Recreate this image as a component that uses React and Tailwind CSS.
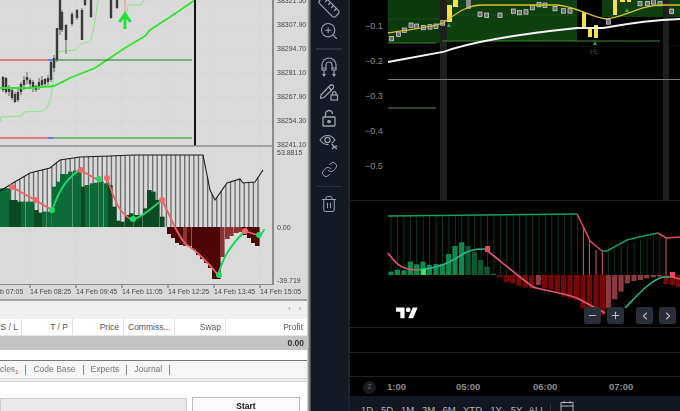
import { Ruler, ZoomIn, Link, Trash2, Minus, Plus, ChevronLeft, ChevronRight } from "lucide-react";

const sans = "font-['Liberation_Sans',Arial,sans-serif]";

const priceLabels = ["38321.50", "38307.90", "38294.70", "38281.10", "38267.90", "38254.30", "38241.10"];
const dateLabels = ["14 Feb 08:25", "14 Feb 09:45", "14 Feb 11:05", "14 Feb 12:25", "14 Feb 13:45", "14 Feb 15:05"];
const dateTicks = [30, 76, 122, 168, 214, 260];
const rangeButtons = [
  ["1D", "w-[20px]"], ["5D", "w-[20px]"], ["1M", "w-[21px]"], ["3M", "w-[21px]"], ["6M", "w-[20px]"],
  ["YTD", "w-[27px]"], ["1Y", "w-[20px]"], ["5Y", "w-[21px]"], ["ALL", "w-[20px]"],
];

// x, wick top, wick bottom, body top, body bottom
const leftCandles = [
  [3, 76, 92, 77, 90], [6, 77, 94, 78, 92], [9, 85, 96, 87, 92], [12, 88, 100, 90, 98], [15, 92, 103, 94, 102],
  [18, 88, 102, 92, 100], [21, 82, 95, 84, 92], [24, 76, 90, 80, 85], [27, 72, 84, 77, 80], [30, 78, 88, 80, 84],
  [33, 80, 92, 82, 88], [36, 85, 92, 86, 90], [39, 78, 90, 82, 88], [42, 76, 88, 80, 85], [45, 78, 86, 79, 84],
  [48, 75, 85, 78, 82], [51, 60, 82, 62, 80], [54, 55, 72, 58, 68], [57, 28, 62, 28, 60], [60, 0, 35, 0, 30],
  [62, 10, 32, 12, 30], [66, 24, 54, 25, 40], [72, 12, 26, 14, 24], [77, 9, 20, 10, 18], [82, 8, 40, 10, 40],
  [85, 0, 6, 0, 5], [91, 0, 18, 0, 17], [111, 0, 19, 0, 18], [117, 0, 9, 0, 8],
];

// x, top of the bar in zoomed px, shade
const leftBars = [
  [0, 115, 0], [3, 115, 0], [6, 115, 0], [9, 150, 1], [13, 150, 1], [17, 155, 1], [21, 155, 0], [26, 155, 0], [30, 155, 0],
  [34, 180, 1], [38, 188, 1], [42, 185, 0], [47, 185, 0], [52, 110, 0], [56, 95, 0], [60, 72, 0], [64, 72, 0], [68, 65, 0],
  [73, 62, 0], [77, 60, 0], [81, 110, 1], [85, 105, 0], [90, 100, 0], [94, 98, 0], [99, 95, 0], [104, 100, 0], [108, 105, 1],
  [112, 170, 1], [116, 212, 1], [120, 215, 1], [125, 195, 1], [129, 190, 1], [134, 195, 1], [138, 195, 1], [143, 175, 1],
  [147, 120, 1], [151, 125, 1], [155, 150, 1], [160, 200, 1],
].map(([x, z, c]) => [x, 150 + z / 3, c]);

const redStairs = [
  [167, 234, 1], [171, 238, 1], [175, 243, 1], [179, 245, 1], [183, 246, 2], [187, 246, 1], [192, 250, 1], [196, 255, 1],
  [200, 259, 1], [204, 263, 1], [208, 268, 1], [212, 279, 1], [216, 279, 1], [220, 257, 2], [225, 239, 2], [229, 236, 2],
  [234, 233, 2], [238, 232, 2], [242, 235, 1], [247, 238, 1], [251, 243, 1], [255, 246, 1],
];

const oscTop = [[0, 191], [13, 183], [30, 173], [50, 168], [60, 160], [80, 157], [110, 156], [133, 155], [203, 155], [210, 190], [215, 200], [227, 183], [240, 179], [243, 183], [255, 182], [263, 170]];

function topAt(x) {
  for (let i = 1; i < oscTop.length; i++) {
    const [x0, y0] = oscTop[i - 1];
    const [x1, y1] = oscTop[i];
    if (x <= x1) return y0 + ((x - x0) / (x1 - x0)) * (y1 - y0);
  }
  return 170;
}

const panelBars = [
  [243, 215, 0], [262, 209, 0], [282, 211, 0], [301, 185, 0], [320, 193, 0], [339, 185, 0], [358, 195, 0], [378, 192, 0],
  [397, 192, 0], [416, 162, 0], [435, 138, 0], [455, 127, 0], [474, 138, 1], [493, 157, 1], [512, 180, 1], [531, 200, 1], [550, 220, 1],
];
const panelDownBars = [
  [570, 232, 0], [589, 246, 0], [608, 250, 0], [627, 258, 0], [646, 262, 0], [665, 265, 0], [685, 255, 1], [704, 265, 0],
  [723, 268, 0], [742, 275, 0], [761, 290, 0], [780, 295, 0], [800, 300, 0], [819, 325, 0], [838, 325, 0], [858, 335, 0],
  [877, 345, 0], [895, 325, 1], [914, 298, 1], [933, 275, 1], [952, 250, 1], [972, 243, 1], [991, 240, 1], [1010, 235, 1],
  [1030, 232, 1], [1048, 230, 1], [1068, 252, 0], [1087, 255, 0], [1106, 262, 0],
];
const hollowCandles = [
  [245, 115], [265, 102], [283, 90], [303, 75], [320, 78], [340, 82], [360, 80], [378, 78], [398, 68], [510, 42], [530, 45],
  [570, 45], [610, 33], [628, 37], [648, 35], [667, 22], [687, 13], [705, 15], [735, 25], [760, 32], [780, 32], [895, 65],
  [990, 10], [1012, 10], [1030, 5], [1050, 10], [1085, 33],
];

function zx(x) {
  return 310 + x / 3;
}

function MainChart() {
  return (
    <svg viewBox="0 0 272 147" className="h-[147px] w-[272px] shrink-0">
      {dateTicks.map((x) => (
        <line key={x} x1={x} x2={x} y1="0" y2="146" stroke="#c6c6c6" strokeWidth="0.6" strokeDasharray="1 2" />
      ))}
      {[2, 26, 50, 73, 97, 121].map((y) => (
        <line key={y} x1="0" x2="272" y1={y} y2={y} stroke="#c6c6c6" strokeWidth="0.6" strokeDasharray="1 2" />
      ))}
      <path d="M0 122 L1 117 L22 116 L24 112 L42 111 L47 108 L51 98 L55 62 L58 52 L75 50 L82 43 L90 42 L94 28 L98 0" fill="none" stroke="#7fe67f" strokeWidth="0.9" />
      <path d="M126 18 L128 5 L141 5 L144 0" fill="none" stroke="#7fe67f" strokeWidth="0.9" />
      {leftCandles.map(([x, a, b, c, d]) => (
        <g key={x}>
          <line x1={x} x2={x} y1={a} y2={b} stroke="#333" strokeWidth="0.7" />
          <rect x={x - 1.2} y={c} width="2.4" height={d - c} fill="#3a3a3a" />
        </g>
      ))}
      <path d="M0 88 L30 88 L54 86 L70 78 L95 68 L110 58 L125 48 L145 36 L150 30 L170 17 L195 0" fill="none" stroke="#2ee52e" strokeWidth="1.8" />
      <line x1="0" x2="48" y1="60" y2="60" stroke="#f01818" strokeWidth="1.2" />
      <line x1="48" x2="54" y1="60" y2="60" stroke="#2040e0" strokeWidth="1.2" />
      <line x1="54" x2="192" y1="60" y2="60" stroke="#1d7a1d" strokeWidth="1.2" />
      <line x1="0" x2="48" y1="138" y2="138" stroke="#f01818" strokeWidth="1.2" />
      <line x1="48" x2="54" y1="138" y2="138" stroke="#2040e0" strokeWidth="1.2" />
      <line x1="54" x2="192" y1="138" y2="138" stroke="#0f9a0f" strokeWidth="1.2" />
      <line x1="125" x2="125" y1="0" y2="12" stroke="#f07050" strokeWidth="0.7" />
      <path d="M125 29 L125 14 M119.5 22 L125 14 L130.5 22" fill="none" stroke="#22e03a" strokeWidth="3" />
      <line x1="195" x2="195" y1="0" y2="146" stroke="#111" strokeWidth="2" />
      <line x1="0" x2="272" y1="146" y2="146" stroke="#8d8d8d" strokeWidth="1.6" />
    </svg>
  );
}

function OscillatorChart() {
  return (
    <svg viewBox="0 147 272 138" className="relative z-10 h-[138px] w-[272px] shrink-0 overflow-visible">
      {dateTicks.map((x) => (
        <line key={x} x1={x} x2={x} y1="147" y2="285" stroke="#c6c6c6" strokeWidth="0.6" strokeDasharray="1 2" />
      ))}
      {Array.from({ length: 57 }, (_, i) => 1.5 + i * 4.58).map((x) => (
        <line key={x} x1={x} x2={x} y1={topAt(x)} y2="227" stroke="#6c706d" strokeWidth="1.4" />
      ))}
      {leftBars.map(([x, top, c]) => (
        <rect key={x} x={x} y={top} width="4.6" height={227 - top} fill={c ? "#0b4a22" : "#0a6b36"} />
      ))}
      {redStairs.map(([x, bottom, c]) => (
        <rect key={x} x={x} y="227" width="4.6" height={bottom - 227} fill={c === 2 ? "#8a3434" : "#4c0606"} />
      ))}
      <path d="M0 191 L13 183 L30 173 L50 168 L60 160 L80 157 L110 156 L133 155 L203 155 L210 190 L215 200 L227 183 L240 179 L243 183 L255 182 L263 170" fill="none" stroke="#1a1a1a" strokeWidth="1.1" />
      <g fill="none" strokeWidth="1.8" strokeLinecap="round">
        <path d="M12 187 L35 200 L52 210" stroke="#ef5f5f" />
        <path d="M52 210 C56 200,60 188,68 180 S76 172,80 170" stroke="#25d66a" />
        <path d="M80 170 L98 180" stroke="#ef5f5f" />
        <path d="M107 178 C112 190,116 212,132 220" stroke="#ef5f5f" />
        <path d="M132 220 C145 216,155 205,162 200" stroke="#25d66a" />
        <path d="M162 200 C170 215,178 238,187 245 C195 250,208 262,218 275" stroke="#ef5f5f" />
        <path d="M218 275 C222 262,226 250,245 231" stroke="#0fd65a" />
        <path d="M245 231 L260 236" stroke="#ef5f5f" />
        <path d="M260 236 L264 230" stroke="#0fd65a" />
      </g>
      {[[12, 187, 0], [36, 200, 0], [52, 210, 1], [81, 170, 0], [99, 179, 1], [107, 178, 0], [133, 219, 1], [162, 200, 0], [219, 275, 1], [245, 231, 0], [259, 235, 1]].map(([x, y, c]) => (
        <circle key={x} cx={x} cy={y} r="3" fill={c ? "#22dc6a" : "#f26a6a"} />
      ))}
      <line x1="0" x2="272" y1="284.5" y2="284.5" stroke="#8b8b8b" />
      {dateTicks.map((x) => (
        <line key={x} x1={x} x2={x} y1="285" y2="288" stroke="#666" />
      ))}
    </svg>
  );
}

function PriceChart() {
  return (
    <svg viewBox="387 0 293 200" className="h-[200px] w-[293px] shrink-0">
      <rect x="388" y="0" width="52" height="43" fill="#0d3a0d" />
      <rect x="447" y="0" width="130" height="41" fill="#0f3f0f" />
      <rect x="602" y="0" width="78" height="17" fill="#0f3f0f" />
      <rect x="440" y="0" width="7" height="200" fill="#1f1f1f" />
      <rect x="663" y="0" width="6" height="200" fill="#1f1f1f" />
      <line x1="388" x2="680" y1="46" y2="46" stroke="#3a3a3a" strokeWidth="0.6" strokeDasharray="1 1.5" />
      <line x1="388" x2="440" y1="19" y2="19" stroke="#2f7a2f" strokeWidth="0.7" strokeDasharray="1 1.5" />
      <line x1="447" x2="577" y1="15" y2="15" stroke="#2f7a2f" strokeWidth="0.6" strokeDasharray="1 1.5" />
      <line x1="388" x2="436" y1="43" y2="43" stroke="#3a7a30" />
      <line x1="442" x2="660" y1="41" y2="41" stroke="#3f8a36" />
      <line x1="388" x2="680" y1="79.5" y2="79.5" stroke="#7c7c7c" />
      <line x1="388" x2="436" y1="108" y2="108" stroke="#5f8f52" />
      {hollowCandles.map(([x, y]) => (
        <rect key={x} x={zx(x) - 2} y={y / 3 - 2} width="4" height="4.5" fill="#6f6f6f" stroke="#dcdcdc" strokeWidth="0.7" />
      ))}
      <rect x="466" y="0" width="5" height="9" fill="#8b8b8b" />
      {[[447, 5, 5, 17], [453, 0, 5, 7], [582, 12, 4, 15], [588, 28, 4, 9], [594, 25, 4, 13], [613, 0, 4, 15], [620, 0, 5, 2], [627, 0, 4, 2]].map(([x, y, w, h]) => (
        <rect key={x} x={x} y={y} width={w} height={h} fill="#f7e04a" />
      ))}
      <path d="M388 33 C 410 29, 430 28, 443 23 C 455 15, 465 5, 483 5 L557 5 C 575 6, 590 17, 606 19 C 625 17, 640 5, 663 5 L680 5" fill="none" stroke="#d8c22e" strokeWidth="1.3" />
      <path d="M388 62 L443 52 C 465 44, 500 36, 577 28 L603 28 C 625 24, 650 20, 680 19" fill="none" stroke="#f5f5f5" strokeWidth="1.8" />
      <path d="M449 23 L451 27 L447 27 Z M627 8 L629 12 L625 12 Z M595 41 L597 45 L593 45 Z" fill="#2aa84a" />
      <text x="590" y="54" fontSize="7" fill="#2c5a3c" fontFamily="Liberation Sans">HL</text>
    </svg>
  );
}

function MacdChart() {
  return (
    <svg viewBox="387 201 293 126" className="h-[126px] w-[293px] shrink-0">
      {Array.from({ length: 30 }, (_, i) => zx(243 + i * 19.3)).map((x) => (
        <line key={x} x1={x} x2={x} y1="215" y2="275" stroke="#0d4a2b" strokeWidth="0.8" />
      ))}
      {Array.from({ length: 9 }, (_, i) => zx(895 + i * 19.3)).map((x) => (
        <line key={x} x1={x} x2={x} y1={251 - (x - 608) * 0.35} y2="275" stroke="#0d4a2b" strokeWidth="0.8" />
      ))}
      {[820, 838, 858, 877, 1068].map((x, i) => (
        <line key={x} x1={zx(x)} x2={zx(x)} y1={[228, 241, 250, 251, 238][i]} y2="275" stroke="#e05a6e" strokeWidth="1" />
      ))}
      {panelBars.map(([x, top, c]) => (
        <rect key={x} x={zx(x) - 2.6} y={200 + top / 3} width="5.2" height={(225 - top) / 3} fill={c ? "#0b5a30" : "#0e8a4c"} />
      ))}
      {panelDownBars.map(([x, bottom, c]) => (
        <rect key={x} x={zx(x) - 2.6} y="275" width="5.2" height={(bottom - 225) / 3} fill={c ? "#8c3a3f" : "#7a0707"} />
      ))}
      <path d="M388 216 L577 214 " fill="none" stroke="#12a05c" strokeWidth="1.5" />
      <path d="M577 214 L584 228 L590 241 L602 251" fill="none" stroke="#e8455f" strokeWidth="1.5" />
      <path d="M602 251 L607 251 L627 240 L643 236 L658 233" fill="none" stroke="#12a05c" strokeWidth="1.5" />
      <path d="M658 233 L666 238 L680 237" fill="none" stroke="#e8455f" strokeWidth="1.5" />
      <g fill="none" strokeWidth="1.6">
        <path d="M388 253 C 395 262, 400 270, 417 270" stroke="#e8557a" />
        <path d="M417 270 C 440 268, 450 262, 460 256 C 468 250, 475 249, 485 249" stroke="#2bb58a" />
        <path d="M485 249 C497 258,510 270,533 287 C545 291,557 291,577 298 L605 313" stroke="#e8557a" />
        <path d="M625 308 C 635 298, 650 280, 663 277 L672 277" stroke="#2bb58a" />
        <path d="M672 277 L680 279" stroke="#e8557a" />
      </g>
      <rect x="421" y="269" width="5" height="6" fill="#34e856" />
      <rect x="485" y="246" width="5" height="6" fill="#e8455f" />
      <rect x="670" y="272" width="5" height="5" fill="#e8455f" />
    </svg>
  );
}

function MagnetIcon() {
  return (
    <svg width="20" height="22" viewBox="0 0 20 22" fill="none" stroke="currentColor" strokeWidth="1.2">
      <path d="M3 14V9a7 7 0 0 1 14 0v5h-4V9a3 3 0 0 0-6 0v5Z" />
      <path d="M3 12h4M13 12h4M5 14v5M15 14v5M3.5 18l1.5 2 1.5-2M13.5 18l1.5 2 1.5-2" />
    </svg>
  );
}

function PencilLockIcon() {
  return (
    <svg width="20" height="20" viewBox="0 0 20 20" fill="none" stroke="currentColor" strokeWidth="1.2">
      <path d="M2 13 11 3.5a2 2 0 0 1 3 3L5 15.5l-3.5.8Z" />
      <path d="M9.5 5 12.5 8" />
      <rect x="12" y="13" width="6.5" height="5" />
      <path d="M13.5 13v-1.5a1.8 1.8 0 0 1 3.6 0V13" />
    </svg>
  );
}

function LockIcon() {
  return (
    <svg width="18" height="18" viewBox="0 0 18 18" fill="none" stroke="currentColor" strokeWidth="1.3">
      <rect x="3" y="8" width="12" height="9" rx="0.5" />
      <path d="M5.5 8V5a3.5 3.5 0 0 1 7 0" />
      <circle cx="9" cy="12.5" r="1.2" fill="currentColor" />
    </svg>
  );
}

function EyeIcon() {
  return (
    <svg width="20" height="20" viewBox="0 0 20 20" fill="none" stroke="currentColor" strokeWidth="1.2">
      <path d="M1 8c4-6 11-6 15 0-1 1.5-2 2.5-3.5 3.2" />
      <path d="M1 8c2 3 5 4.8 8.5 4.5" />
      <circle cx="8.5" cy="8" r="2.6" />
      <path d="m13 12 2 3 3-1M15 15l-2 2M15 15l3 2" strokeWidth="1.4" />
    </svg>
  );
}

function Sidebar() {
  return (
    <div className="flex w-[39px] shrink-0 flex-col items-center overflow-hidden border-r-2 border-[#1d222c] bg-[#131a26] pr-[1px] text-[#9ea2ab]">
      <Ruler size={24} strokeWidth={1.2} className="-mt-[5px] mb-[2px] shrink-0" />
      <ZoomIn size={20} strokeWidth={1.3} className="shrink-0" />
      <div className="mb-[6px] mt-[7px] h-[1.5px] w-[26px] shrink-0 bg-[#2a303c]" />
      <div className="mb-[4px] flex shrink-0"><MagnetIcon /></div>
      <div className="mb-[7px] flex shrink-0"><PencilLockIcon /></div>
      <div className="mb-[5px] flex shrink-0"><LockIcon /></div>
      <div className="mb-[9px] flex shrink-0"><EyeIcon /></div>
      <Link size={17} strokeWidth={1.3} className="shrink-0" />
      <div className="mb-[8px] mt-[8px] h-[1.5px] w-[26px] shrink-0 bg-[#2a303c]" />
      <Trash2 size={18} strokeWidth={1.3} className="shrink-0" />
    </div>
  );
}

function LeftPanel() {
  return (
    <div className={`flex w-[307px] shrink-0 flex-col bg-white text-[#333] ${sans}`}>
      <div className="flex h-[147px] shrink-0 bg-[#dadada]">
        <MainChart />
        <div className="-my-[3px] flex h-[152px] flex-1 flex-col justify-between border-l-2 border-[#8b8b8b] pl-[3px] text-[7px] leading-[8px] text-[#4a4a4a]">
          {priceLabels.map((p) => <span key={p}>{p}</span>)}
        </div>
      </div>
      <div className="flex h-[138px] shrink-0 bg-[#dadada]">
        <OscillatorChart />
        <div className="flex flex-1 flex-col border-l-2 border-[#8b8b8b] pl-[3px] text-[7px] leading-[8px] text-[#4a4a4a]">
          <span className="mt-[2px]">53.8815</span>
          <span className="mt-[67px]">0.00</span>
          <span className="mt-[45px]">-39.719</span>
        </div>
      </div>
      <div className="flex h-[16px] shrink-0 items-center overflow-hidden border-b-2 border-[#a3a3a3] bg-[#dadada] pt-[1px] text-[7px] text-[#4a4a4a]">
        <span className="w-[30px] shrink-0 whitespace-nowrap pr-[7px] text-right">b 07:05</span>
        {dateLabels.map((d) => (
          <span key={d} className="w-[46px] shrink-0 whitespace-nowrap">{d}</span>
        ))}
      </div>
      <div className="flex h-[18px] shrink-0 items-center justify-end gap-[8px] bg-[#f0f0f0] pb-[2px] pr-[6px] text-[7px] text-[#888]">
        <span>‹</span>
        <span>›</span>
      </div>
      <div className="grid h-[17px] shrink-0 grid-cols-[22px_51px_51px_51px_51px_81px] items-center whitespace-nowrap border-b border-[#e4e4e4] bg-white text-[8.5px] text-[#555]">
        <span className="border-r border-[#e0e0e0] pr-[3px] text-right leading-[16px]">S / L</span>
        <span className="border-r border-[#e0e0e0] pr-[4px] text-right leading-[16px]">T / P</span>
        <span className="border-r border-[#e0e0e0] pr-[4px] text-right leading-[16px]">Price</span>
        <span className="overflow-hidden border-r border-[#e0e0e0] pl-[4px] leading-[16px]">Commiss...</span>
        <span className="border-r border-[#e0e0e0] pr-[4px] text-right leading-[16px]">Swap</span>
        <span className="pr-[4px] text-right leading-[16px]">Profit</span>
      </div>
      <div className="flex h-[14px] shrink-0 items-center justify-end bg-[#c4c4c4] pr-[3px] text-[8.5px] font-bold text-[#333]">0.00</div>
      <div className="h-[10px] shrink-0 bg-white" />
      <div className="flex h-[18px] shrink-0 items-center gap-[7px] border-t border-[#777] bg-[#f6f6f6] text-[8.5px] text-[#777]">
        <span>cles<sub className="text-[6px] text-[#d03030]">1</sub></span>
        <span className="h-[10px] w-px bg-[#888]" />
        <span>Code Base</span>
        <span className="h-[10px] w-px bg-[#888]" />
        <span>Experts</span>
        <span className="h-[10px] w-px bg-[#888]" />
        <span>Journal</span>
        <span className="h-[10px] w-px bg-[#888]" />
      </div>
      <div className="h-[4px] shrink-0 border-y border-[#d0d0d0] bg-[#f0f0f0]" />
      <div className="flex flex-1 items-start gap-[5px] bg-white pt-[15px]">
        <div className="mt-[1px] h-[20px] w-[187px] border border-[#ccc] bg-[#e8e8e8]" />
        <div className="flex h-[20px] w-[108px] justify-center border border-[#bbb] bg-[#fafafa] pt-[3px] text-[8.5px] font-bold leading-[11px] text-[#111]">Start</div>
      </div>
    </div>
  );
}

function RightPanel() {
  return (
    <div className={`flex flex-1 flex-col bg-black text-[#8b8b8b] ${sans}`}>
      <div className="flex h-[201px] shrink-0 border-b border-[#1c1c1c]">
        <div className="flex w-[37px] shrink-0 flex-col gap-[24.6px] pl-[15px] pt-[21px] text-[9px] leading-[10.4px]">
          {["−0.1", "−0.2", "−0.3", "−0.4", "−0.5"].map((v) => <span key={v}>{v}</span>)}
        </div>
        <PriceChart />
      </div>
      <div className="relative flex h-[127px] shrink-0 border-b border-[#222] pl-[37px]">
        <MacdChart />
        <svg viewBox="0 0 36 28" className="absolute left-[46px] top-[104px] h-[17px] w-[22px]" fill="#fff">
          <path d="M14 22H7V11H0V4h14v18zM28 22h-8l7.5-18h8L28 22z" />
          <circle cx="20" cy="8" r="4" />
        </svg>
        <div className="absolute left-[234px] top-[106px] flex items-center text-[#b8bbc2]">
          <span className="flex h-[17px] w-[17px] items-center justify-center rounded-[3px] bg-[#2a2e39]"><Minus size={11} strokeWidth={2.4} /></span>
          <span className="ml-[6px] flex h-[17px] w-[17px] items-center justify-center rounded-[3px] bg-[#2a2e39]"><Plus size={11} strokeWidth={2.4} /></span>
          <span className="ml-[12px] flex h-[17px] w-[17px] items-center justify-center rounded-[3px] bg-[#2a2e39]"><ChevronLeft size={12} strokeWidth={2.2} /></span>
          <span className="ml-[6px] flex h-[17px] w-[17px] items-center justify-center rounded-[3px] bg-[#2a2e39]"><ChevronRight size={12} strokeWidth={2.2} /></span>
        </div>
      </div>
      <div className="h-[25px] shrink-0 border-b border-[#222]" />
      <div className="h-[24px] shrink-0 border-b border-[#222]" />
      <div className="flex h-[19px] shrink-0 items-center pl-[13px] pt-[1px] text-[9.5px] font-bold">
        <span className="mr-[11px] flex h-[13px] w-[13px] items-center justify-center rounded-full bg-[#1a1b20] text-[7px] font-normal text-[#666]">Z</span>
        <span className="w-[69px]">1:00</span>
        <span className="w-[77px]">05:00</span>
        <span className="w-[76px]">06:00</span>
        <span>07:00</span>
      </div>
      <div className="flex h-[15px] shrink-0 items-start overflow-hidden bg-[#131722] pl-[7px] pt-[8px] text-[9.5px] leading-[11px] text-[#b2b5be]">
        {rangeButtons.map(([t, w]) => (
          <span key={t} className={`${w} shrink-0 text-center`}>{t}</span>
        ))}
        <span className="ml-[3px] mr-[9px] h-[12px] w-px shrink-0 bg-[#333]" />
        <svg width="14" height="14" viewBox="0 0 14 14" fill="none" stroke="currentColor" className="-mt-[4px] shrink-0">
          <rect x="1" y="2.5" width="12" height="11" />
          <path d="M1 6h12M4 1v2.5M10 1v2.5" />
        </svg>
      </div>
    </div>
  );
}

export default function App() {
  return (
    <div className="h-[411px] w-[680px] overflow-hidden bg-black">
      <div className="flex h-[411px] w-[680px] blur-[0.5px]">
        <LeftPanel />
        <div className="w-[4px] shrink-0 bg-gradient-to-r from-[#e0e0e0] to-[#3a3a3a]" />
        <Sidebar />
        <RightPanel />
      </div>
    </div>
  );
}
